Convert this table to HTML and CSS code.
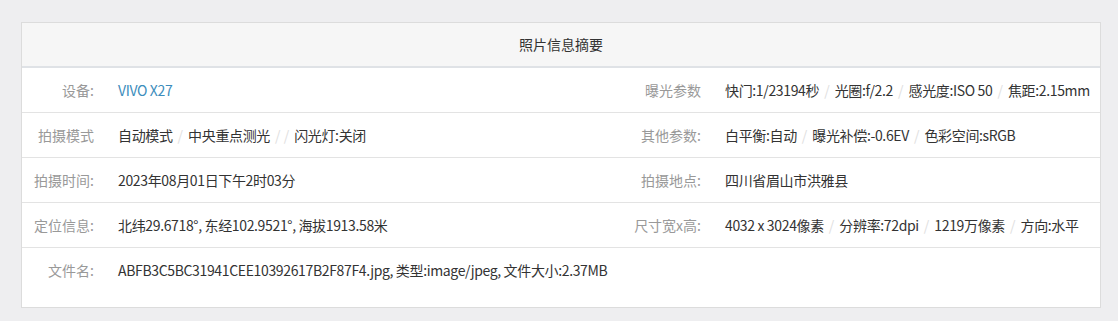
FILE: index.html
```html
<!DOCTYPE html>
<html lang="zh-CN">
<head>
<meta charset="utf-8">
<title>照片信息摘要</title>
<link rel="stylesheet" href="styles.css">
</head>
<body>
<div class="card">
  <div class="card-head">照片信息摘要</div>
  <table class="info">
    <colgroup>
      <col class="c-l1"><col class="c-v1"><col class="c-l2"><col class="c-v2">
    </colgroup>
    <tbody>
      <tr>
        <th>设备:</th>
        <td><a class="link" href="#">VIVO X27</a></td>
        <th>曝光参数</th>
        <td>快门:1/23194秒<span class="sep">/</span>光圈:f/2.2<span class="sep">/</span>感光度:ISO 50<span class="sep">/</span>焦距:2.15mm</td>
      </tr>
      <tr>
        <th>拍摄模式</th>
        <td>自动模式<span class="sep">/</span>中央重点测光<span class="sep">/ /</span>闪光灯:关闭</td>
        <th>其他参数:</th>
        <td>白平衡:自动<span class="sep">/</span>曝光补偿:-0.6EV<span class="sep">/</span>色彩空间:sRGB</td>
      </tr>
      <tr>
        <th>拍摄时间:</th>
        <td>2023年08月01日下午2时03分</td>
        <th>拍摄地点:</th>
        <td>四川省眉山市洪雅县</td>
      </tr>
      <tr>
        <th>定位信息:</th>
        <td>北纬29.6718°, 东经102.9521°, 海拔1913.58米</td>
        <th>尺寸宽x高:</th>
        <td>4032 x 3024像素<span class="sep">/</span>分辨率:72dpi<span class="sep">/</span>1219万像素<span class="sep">/</span>方向:水平</td>
      </tr>
      <tr>
        <th>文件名:</th>
        <td colspan="3">ABFB3C5BC31941CEE10392617B2F87F4.jpg, 类型:image/jpeg, 文件大小:2.37MB</td>
      </tr>
    </tbody>
  </table>
</div>
</body>
</html>
```
FILE: styles.css
```css
html, body {
  margin: 0;
  padding: 0;
  background: #eeeef0;
}
body {
  padding: 22px 17px 0 21px;
  font-family: "Noto Sans CJK SC", "Noto Sans", sans-serif;
  font-size: 14px;
  line-height: 20px;
  color: #333;
}
.card {
  width: 1078px;
  background: #fff;
  border: 1px solid #dcdcdc;
  padding-bottom: 15px;
}
.card-head {
  height: 43px;
  line-height: 43px;
  text-align: center;
  background: #f6f6f6;
  border-bottom: 2px solid #dfe2e6;
  color: #333;
}
.info {
  width: 100%;
  border-collapse: collapse;
  table-layout: fixed;
}
.c-l1 { width: 84px; }
.c-v1 { width: 507px; }
.c-l2 { width: 100px; }
.c-v2 { width: auto; }
.info th,
.info td {
  padding: 12px 12px;
  text-align: left;
  vertical-align: top;
  white-space: nowrap;
}
.info th {
  font-weight: normal;
  color: #999;
  text-align: right;
}
.info tr + tr th,
.info tr + tr td {
  border-top: 1px solid #e3e3e3;
}
.info td {
  color: #333;
  letter-spacing: -0.35px;
}
.link {
  color: #3c8dbc;
  text-decoration: none;
}
.sep {
  padding: 0 5px;
  color: #e0e0e0;
  letter-spacing: 0;
}
```
